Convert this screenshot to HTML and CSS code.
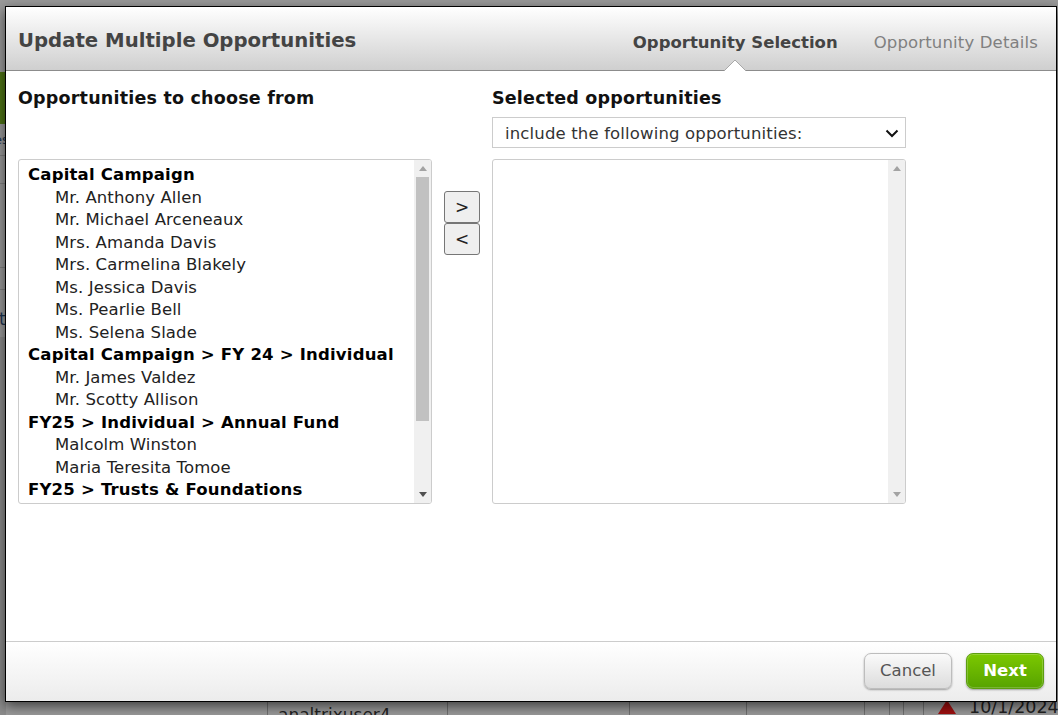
FILE: index.html
```html
<!DOCTYPE html>
<html lang="en">
<head>
  <meta charset="UTF-8">
  <meta name="viewport" content="width=device-width, initial-scale=1.0">
  <title>Update Multiple Opportunities</title>
  <link rel="stylesheet" href="styles.css">
</head>
<body>

  <!-- page behind the dialog -->
  <div class="backdrop">
    <div class="bg-green"></div>
    <div class="bg-dark"></div>
    <div class="bg-line line-1"></div>
    <div class="bg-line line-2"></div>
    <div class="bg-line line-3"></div>
    <div class="bg-line line-4"></div>
    <span class="bg-letter bg-es">es</span>
    <span class="bg-letter bg-t">t</span>
    <div class="bg-cell cell-1"></div>
    <div class="bg-cell cell-2"></div>
    <div class="bg-cell cell-3"></div>
    <div class="bg-cell cell-4"></div>
    <div class="bg-cell cell-5"></div>
    <div class="bg-cell cell-6"></div>
    <div class="bg-cell cell-7"></div>
    <div class="bg-cell cell-8"></div>
    <span class="bg-user">analtrixuser4</span>
    <svg class="bg-warn" width="18" height="14" viewBox="0 0 18 14"><path d="M9 0L18 14H0z" fill="#a01010"/></svg>
    <span class="bg-date">10/1/2024</span>
  </div>

  <div class="dialog">
    <header class="dialog-head">
      <h1>Update Multiple Opportunities</h1>
      <nav class="steps">
        <span class="step active">
          Opportunity Selection
          <svg class="notch" width="24" height="12" viewBox="0 0 24 12"><path d="M1 12L12 1l11 11z" fill="white"/><path d="M1 12L12 1l11 11" fill="none" stroke="#a8a8a8"/></svg>
        </span>
        <span class="step">Opportunity Details</span>
      </nav>
    </header>

    <main class="dialog-body">
      <div class="col">
        <h2>Opportunities to choose from</h2>
        <div class="list-spacer"></div>
        <div class="listbox">
          <div class="list-items">
            <div class="group">Capital Campaign</div>
            <div class="item">Mr. Anthony Allen</div>
            <div class="item">Mr. Michael Arceneaux</div>
            <div class="item">Mrs. Amanda Davis</div>
            <div class="item">Mrs. Carmelina Blakely</div>
            <div class="item">Ms. Jessica Davis</div>
            <div class="item">Ms. Pearlie Bell</div>
            <div class="item">Ms. Selena Slade</div>
            <div class="group">Capital Campaign &gt; FY 24 &gt; Individual</div>
            <div class="item">Mr. James Valdez</div>
            <div class="item">Mr. Scotty Allison</div>
            <div class="group">FY25 &gt; Individual &gt; Annual Fund</div>
            <div class="item">Malcolm Winston</div>
            <div class="item">Maria Teresita Tomoe</div>
            <div class="group">FY25 &gt; Trusts &amp; Foundations</div>
          </div>
          <div class="scrollbar">
            <svg class="arrow" width="8" height="5" viewBox="0 0 8 5"><path d="M4 0L8 5H0z"/></svg>
            <div class="track"><div class="thumb"></div></div>
            <svg class="arrow active" width="8" height="5" viewBox="0 0 8 5"><path d="M0 0H8L4 5z"/></svg>
          </div>
        </div>
      </div>

      <div class="move-btns">
        <button class="move">&gt;</button>
        <button class="move">&lt;</button>
      </div>

      <div class="col">
        <h2>Selected opportunities</h2>
        <div class="select-box">
          <span>include the following opportunities:</span>
          <svg width="14" height="9" viewBox="0 0 14 9"><path d="M1.5 1.5L7 7l5.5-5.5" fill="none" stroke="#111" stroke-width="2"/></svg>
        </div>
        <div class="listbox">
          <div class="list-items"></div>
          <div class="scrollbar">
            <svg class="arrow" width="8" height="5" viewBox="0 0 8 5"><path d="M4 0L8 5H0z"/></svg>
            <div class="track"></div>
            <svg class="arrow" width="8" height="5" viewBox="0 0 8 5"><path d="M0 0H8L4 5z"/></svg>
          </div>
        </div>
      </div>
    </main>

    <footer class="dialog-foot">
      <button class="btn cancel">Cancel</button>
      <button class="btn next">Next</button>
    </footer>
  </div>

</body>
</html>
```

FILE: styles.css
```css
* {
  box-sizing: border-box;
}

body {
  margin: 0;
  height: 715px;
  overflow: hidden;
  font-family: 'DejaVu Sans', Verdana, sans-serif;
  background: #999;
}

/* Page behind the dialog */
.backdrop {
  position: absolute;
  top: 0;
  left: 0;
  width: 1058px;
  height: 715px;
  background: #9a9a9a;
  overflow: hidden;
}

.bg-green {
  position: absolute;
  top: 72px;
  left: 0;
  width: 6px;
  height: 52px;
  background: #4f7416;
}

.bg-dark {
  position: absolute;
  top: 337px;
  left: 0;
  width: 6px;
  height: 378px;
  background: #8c8c8c;
}

.bg-line {
  position: absolute;
  left: 0;
  width: 6px;
  height: 1px;
  background: #808080;
}

.line-1 { top: 155px; }
.line-2 { top: 183px; }
.line-3 { top: 267px; }
.line-4 { top: 289px; }

.bg-letter {
  position: absolute;
  font-size: 17px;
  color: #1c3350;
}

.bg-es {
  top: 132px;
  left: -6px;
  font-size: 13px;
}

.bg-t {
  top: 309px;
  left: -1px;
}

.bg-cell {
  position: absolute;
  top: 702px;
  width: 1px;
  height: 13px;
  background: #707070;
}

.cell-1 { left: 267px; }
.cell-2 { left: 447px; }
.cell-3 { left: 629px; }
.cell-4 { left: 746px; }
.cell-5 { left: 864px; }
.cell-6 { left: 889px; }
.cell-7 { left: 903px; }
.cell-8 { left: 923px; }

.bg-user {
  position: absolute;
  top: 705px;
  left: 278px;
  font-size: 17px;
  color: #222;
}

.bg-warn {
  position: absolute;
  top: 700px;
  left: 938px;
}

.bg-date {
  position: absolute;
  top: 697px;
  left: 969px;
  font-size: 17.5px;
  color: #222;
}

/* Dialog */
.dialog {
  position: absolute;
  top: 6px;
  left: 5px;
  width: 1052px;
  height: 696px;
  display: flex;
  flex-direction: column;
  background: white;
  border: 1px solid black;
  box-shadow: 0 4px 12px rgba(0,0,0,0.6);
}

.dialog-head {
  height: 64px;
  flex-shrink: 0;
  display: flex;
  justify-content: space-between;
  padding: 0 18px 0 12px;
  background: linear-gradient(#ffffff, #cfcfcf);
  border-bottom: 1px solid #8c8c8c;
}

.dialog-head h1 {
  margin: 21px 0 0 0;
  font-size: 19.7px;
  line-height: 26px;
  font-weight: bold;
  color: #444;
}

.steps {
  display: flex;
  gap: 36px;
  padding-top: 26px;
}

.step {
  position: relative;
  font-size: 16.5px;
  line-height: 20px;
  letter-spacing: 0.15px;
  color: #808080;
}

.step.active {
  font-weight: bold;
  letter-spacing: 0;
  color: #444;
}

/* little notch under the active step */
.notch {
  position: absolute;
  top: 26px;
  left: 50%;
  margin-left: -12px;
}

.dialog-body {
  flex: 1;
  display: flex;
  padding: 15px 12px 0 12px;
  overflow: hidden;
}

.col {
  width: 414px;
  display: flex;
  flex-direction: column;
}

.col h2 {
  margin: 0;
  font-size: 17.5px;
  line-height: 24px;
  letter-spacing: 0.2px;
  font-weight: bold;
  color: #111;
}

.list-spacer {
  height: 49px;
}

.select-box {
  height: 31px;
  margin-top: 7px;
  margin-bottom: 11px;
  display: flex;
  align-items: center;
  justify-content: space-between;
  padding: 1px 6px 0 12px;
  border: 1px solid #ccc;
  font-size: 16.5px;
  letter-spacing: 0.15px;
  color: #333;
}

.listbox {
  width: 414px;
  height: 345px;
  display: flex;
  border: 1px solid #ccc;
  border-radius: 3px;
  overflow: hidden;
}

.list-items {
  flex: 1;
  padding-top: 4px;
  padding-left: 9px;
  overflow: hidden;
}

.group {
  font-size: 16.5px;
  line-height: 22.5px;
  letter-spacing: 0.2px;
  font-weight: bold;
  color: #000;
}

.item {
  font-size: 16.5px;
  line-height: 22.5px;
  letter-spacing: 0.1px;
  padding-left: 27px;
  color: #222;
}

.scrollbar {
  width: 17px;
  display: flex;
  flex-direction: column;
  align-items: center;
  background: #f0f0f0;
  padding: 6px 0;
}

.scrollbar .arrow {
  flex-shrink: 0;
  fill: #a3a3a3;
}

.scrollbar .arrow.active {
  fill: #505050;
}

.track {
  flex: 1;
  width: 100%;
  padding: 6px 2px 0 2px;
}

.thumb {
  height: 244px;
  background: #c1c1c1;
}

.move-btns {
  width: 60px;
  display: flex;
  flex-direction: column;
  align-items: center;
  padding-top: 105px;
}

.move {
  width: 36px;
  height: 32px;
  padding: 0;
  font-family: inherit;
  font-size: 17px;
  color: #222;
  background: #efefef;
  border: 1px solid #767676;
  border-radius: 3px;
}

.dialog-foot {
  height: 60px;
  flex-shrink: 0;
  display: flex;
  justify-content: flex-end;
  gap: 14px;
  padding: 11px 12px 0 0;
  background: linear-gradient(#ffffff, #ececec);
  border-top: 1px solid #ccc;
}

.btn {
  height: 36px;
  padding: 0 0 2px 0;
  font-family: inherit;
  font-size: 16.5px;
  border-radius: 7px;
}

.cancel {
  width: 88px;
  color: #555;
  background: linear-gradient(#fafafa, #dcdcdc);
  border: 1px solid #bdbdbd;
  box-shadow: 0 1px 2px rgba(0,0,0,0.35);
}

.next {
  width: 78px;
  font-weight: bold;
  color: white;
  background: linear-gradient(#7cc800, #57a300);
  border: 1px solid #5d9e10;
  box-shadow: 0 1px 2px rgba(0,0,0,0.35), inset 0 0 0 1px rgba(255,255,255,0.2);
}
```
